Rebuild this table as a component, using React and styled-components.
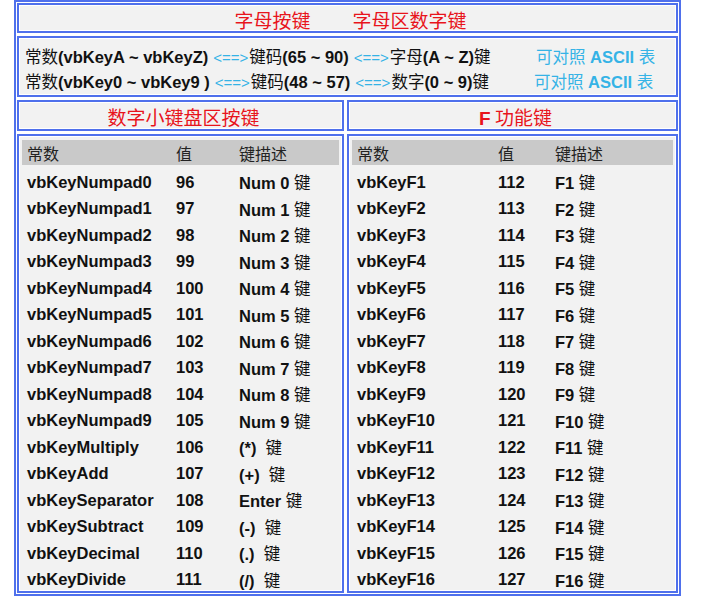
import React from 'react'
import styled, { createGlobalStyle } from 'styled-components';

const BLUE = '#4f70ec';
const CYAN = '#35b3e6';
const RED = '#e8141c';

const GlobalStyle = createGlobalStyle`
    body {
        margin: 0;
        background: #ffffff;
        font-family: "Liberation Sans", "Noto Sans CJK SC", sans-serif;
    }
`;

const Frame = styled.div`
    margin-left: 14px;
    width: 667px;
    height: 596px;
    box-sizing: border-box;
    border: 2px solid ${BLUE};
    padding: 1px;
    background: #ffffff;
    display: grid;
    grid-template-columns: 327px 1fr;
    grid-template-rows: 30px 61px 31px 1fr;
    gap: 3px;
`;

const Cell = styled.div`
    box-sizing: border-box;
    border: 2px solid ${BLUE};
    box-shadow: inset 0 0 0 1px #ffffff;
    background: #f2f2f2;
    grid-column: ${props => props.$wide ? '1 / 3' : 'auto'};
    overflow: hidden;
    min-height: 0;
`;

const TitleCell = styled(Cell)`
    display: flex;
    justify-content: center;
    align-items: center;
    gap: 42px;
    color: ${RED};
    font-family: "Noto Sans CJK SC", serif;
    font-size: 19px;
    padding: 2px 0 0 6px;
`;

const Bold = styled.b`
    font-family: "Liberation Sans", sans-serif;
    font-weight: 700;
`;

const InfoCell = styled(Cell)`
    padding: 5px 0 0 6px;
`;

const InfoLine = styled.div`
    display: grid;
    grid-template-columns: ${props => props.$first}px auto;
    height: 25px;
    align-items: center;
    font-size: 16.5px;
    font-weight: 700;
    color: #111;
    white-space: nowrap;
`;

const Han = styled.span`
    font-family: "Noto Sans CJK SC", sans-serif;
    font-weight: 400;
`;

const Arrow = styled.span`
    color: ${CYAN};
    font-weight: 400;
    font-size: 15px;
    margin: 0 1px 0 5px;
`;

const Ascii = styled.span`
    color: ${CYAN};
`;

const TableCell = styled(Cell)`
    padding: 4px 3px 0 3px;
`;

const HeadRow = styled.div`
    display: grid;
    grid-template-columns: ${props => props.$cols};
    height: 25px;
    align-items: center;
    padding-left: 5px;
    background: #c9c9c9;
    color: #222;
    font-family: "Noto Sans CJK SC", serif;
    font-size: 16px;
`;

const Body = styled.div`
    padding-top: 4px;
`;

const Row = styled.div`
    display: grid;
    grid-template-columns: ${props => props.$cols};
    height: 26.5px;
    align-items: center;
    padding-left: 5px;
    font-size: 16.5px;
    font-weight: 700;
    color: #111;
    white-space: nowrap;
`;

const numpad = [
    ...Array.from({ length: 10 }, (_, i) => ['vbKeyNumpad' + i, 96 + i, 'Num ' + i + ' ']),
    ['vbKeyMultiply', 106, '(*)\u00a0\u00a0'],
    ['vbKeyAdd', 107, '(+)\u00a0\u00a0'],
    ['vbKeySeparator', 108, 'Enter '],
    ['vbKeySubtract', 109, '(-)\u00a0\u00a0'],
    ['vbKeyDecimal', 110, '(.)\u00a0\u00a0'],
    ['vbKeyDivide', 111, '(/)\u00a0\u00a0'],
];

const fkeys = Array.from({ length: 16 }, (_, i) => ['vbKeyF' + (i + 1), 112 + i, 'F' + (i + 1) + ' ']);

function KeyTable({ cols, rows }) {
    return (
        <TableCell>
            <HeadRow $cols={cols}>
                <span>常数</span>
                <span>值</span>
                <span>键描述</span>
            </HeadRow>
            <Body>
                {rows.map(([name, code, desc]) => (
                    <Row key={name} $cols={cols}>
                        <span>{name}</span>
                        <span>{code}</span>
                        <span>{desc}<Han>键</Han></span>
                    </Row>
                ))}
            </Body>
        </TableCell>
    );
}

export default function App() {
    return (
        <>
            <GlobalStyle />
            <Frame>
                <TitleCell $wide>
                    <span>字母按键</span>
                    <span>字母区数字键</span>
                </TitleCell>
                <InfoCell $wide>
                    <InfoLine $first={511}>
                        <span><Han>常数</Han>(vbKeyA ~ vbKeyZ)<Arrow>&lt;==&gt;</Arrow><Han>键码</Han>(65 ~ 90)<Arrow>&lt;==&gt;</Arrow><Han>字母</Han>(A ~ Z)<Han>键</Han></span>
                        <Ascii><Han>可对照</Han> ASCII <Han>表</Han></Ascii>
                    </InfoLine>
                    <InfoLine $first={509}>
                        <span><Han>常数</Han>(vbKey0 ~ vbKey9 )<Arrow>&lt;==&gt;</Arrow><Han>键码</Han>(48 ~ 57)<Arrow>&lt;==&gt;</Arrow><Han>数字</Han>(0 ~ 9)<Han>键</Han></span>
                        <Ascii><Han>可对照</Han> ASCII <Han>表</Han></Ascii>
                    </InfoLine>
                </InfoCell>
                <TitleCell>
                    <span>数字小键盘区按键</span>
                </TitleCell>
                <TitleCell>
                    <span><Bold>F</Bold> 功能键</span>
                </TitleCell>
                <KeyTable cols="149px 63px 1fr" rows={numpad} />
                <KeyTable cols="141px 57px 1fr" rows={fkeys} />
            </Frame>
        </>
    );
}
